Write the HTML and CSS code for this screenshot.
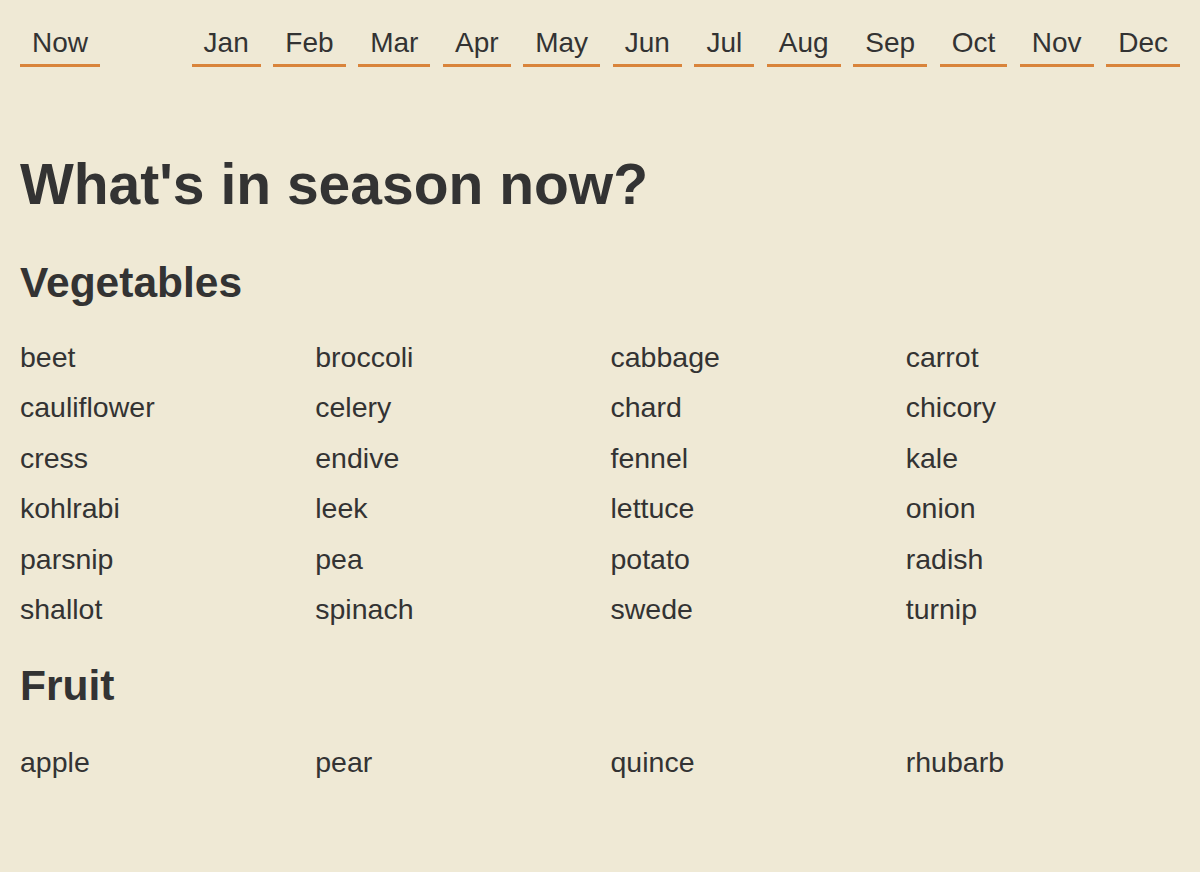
FILE: index.html
```html
<!DOCTYPE html>
<html lang="en">
<head>
<meta charset="utf-8">
<title>What's in season now?</title>
<link rel="stylesheet" href="styles.css">
</head>
<body>
<nav class="nav">
  <a class="nav-link" href="#">Now</a>
  <div class="months">
    <a class="nav-link" href="#">Jan</a>
    <a class="nav-link" href="#">Feb</a>
    <a class="nav-link" href="#">Mar</a>
    <a class="nav-link" href="#">Apr</a>
    <a class="nav-link" href="#">May</a>
    <a class="nav-link" href="#">Jun</a>
    <a class="nav-link" href="#">Jul</a>
    <a class="nav-link" href="#">Aug</a>
    <a class="nav-link" href="#">Sep</a>
    <a class="nav-link" href="#">Oct</a>
    <a class="nav-link" href="#">Nov</a>
    <a class="nav-link" href="#">Dec</a>
  </div>
</nav>
<main>
  <h1 class="title">What's in season now?</h1>
  <section class="group">
    <h2 class="section-title">Vegetables</h2>
    <ul class="produce">
      <li>beet</li><li>broccoli</li><li>cabbage</li><li>carrot</li>
      <li>cauliflower</li><li>celery</li><li>chard</li><li>chicory</li>
      <li>cress</li><li>endive</li><li>fennel</li><li>kale</li>
      <li>kohlrabi</li><li>leek</li><li>lettuce</li><li>onion</li>
      <li>parsnip</li><li>pea</li><li>potato</li><li>radish</li>
      <li>shallot</li><li>spinach</li><li>swede</li><li>turnip</li>
    </ul>
  </section>
  <section class="group group-fruit">
    <h2 class="section-title">Fruit</h2>
    <ul class="produce">
      <li>apple</li><li>pear</li><li>quince</li><li>rhubarb</li>
    </ul>
  </section>
</main>
</body>
</html>
```
FILE: styles.css
```css
html, body {
  margin: 0;
  padding: 0;
}
body {
  background: #efe9d5;
  color: #333333;
  font-family: "Liberation Sans", Arial, sans-serif;
  padding: 20px;
}
.nav {
  display: flex;
  align-items: flex-start;
}
.months {
  display: flex;
  gap: 12.6px;
  margin-left: auto;
}
.nav-link {
  display: block;
  font-size: 28px;
  line-height: 30px;
  padding: 8px 12px 6px;
  color: #333333;
  text-decoration: none;
  border-bottom: 3px solid #d9843b;
}
.title {
  font-size: 57px;
  line-height: 67px;
  font-weight: bold;
  margin: 84px 0 40px;
}
.section-title {
  font-size: 42.5px;
  line-height: 50px;
  font-weight: bold;
  margin: 0 0 24px;
}
.group-fruit .section-title {
  margin: 27px 0 26px;
}
.produce {
  list-style: none;
  margin: 0;
  padding: 0;
  display: grid;
  grid-template-columns: repeat(4, 1fr);
  column-gap: 21px;
  font-size: 28.5px;
  line-height: 50.4px;
}
```
